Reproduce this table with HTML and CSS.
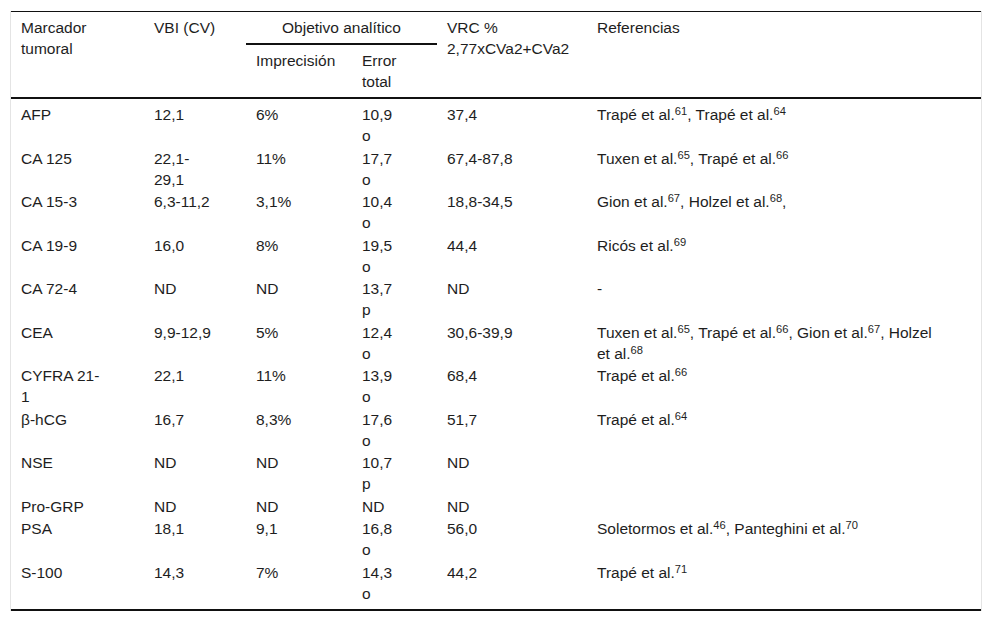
FILE: index.html
```html
<!DOCTYPE html>
<html lang="es">
<head>
<meta charset="utf-8">
<title>Marcadores tumorales</title>
<link rel="stylesheet" href="styles.css">
</head>
<body>
<div class="frame">
<table class="data">
  <colgroup>
    <col class="c1"><col class="c2"><col class="c3"><col class="c4"><col class="c5"><col class="c6">
  </colgroup>
  <thead>
    <tr>
      <th rowspan="2">Marcador<br>tumoral</th>
      <th rowspan="2">VBI (CV)</th>
      <th colspan="2" class="group">Objetivo analítico</th>
      <th rowspan="2">VRC %<br>2,77xCVa2+CVa2</th>
      <th rowspan="2">Referencias</th>
    </tr>
    <tr>
      <th>Imprecisión</th>
      <th>Error<br>total</th>
    </tr>
  </thead>
  <tbody>
    <tr><td>AFP</td><td>12,1</td><td>6%</td><td>10,9<br>o</td><td>37,4</td><td>Trapé et al.<sup>61</sup>, Trapé et al.<sup>64</sup></td></tr>
    <tr><td>CA 125</td><td>22,1-<br>29,1</td><td>11%</td><td>17,7<br>o</td><td>67,4-87,8</td><td>Tuxen et al.<sup>65</sup>, Trapé et al.<sup>66</sup></td></tr>
    <tr><td>CA 15-3</td><td>6,3-11,2</td><td>3,1%</td><td>10,4<br>o</td><td>18,8-34,5</td><td>Gion et al.<sup>67</sup>, Holzel et al.<sup>68</sup>,</td></tr>
    <tr><td>CA 19-9</td><td>16,0</td><td>8%</td><td>19,5<br>o</td><td>44,4</td><td>Ricós et al.<sup>69</sup></td></tr>
    <tr><td>CA 72-4</td><td>ND</td><td>ND</td><td>13,7<br>p</td><td>ND</td><td>-</td></tr>
    <tr><td>CEA</td><td>9,9-12,9</td><td>5%</td><td>12,4<br>o</td><td>30,6-39,9</td><td>Tuxen et al.<sup>65</sup>, Trapé et al.<sup>66</sup>, Gion et al.<sup>67</sup>, Holzel<br>et al.<sup>68</sup></td></tr>
    <tr><td>CYFRA 21-<br>1</td><td>22,1</td><td>11%</td><td>13,9<br>o</td><td>68,4</td><td>Trapé et al.<sup>66</sup></td></tr>
    <tr><td>β-hCG</td><td>16,7</td><td>8,3%</td><td>17,6<br>o</td><td>51,7</td><td>Trapé et al.<sup>64</sup></td></tr>
    <tr><td>NSE</td><td>ND</td><td>ND</td><td>10,7<br>p</td><td>ND</td><td></td></tr>
    <tr><td>Pro-GRP</td><td>ND</td><td>ND</td><td>ND</td><td>ND</td><td></td></tr>
    <tr><td>PSA</td><td>18,1</td><td>9,1</td><td>16,8<br>o</td><td>56,0</td><td>Soletormos et al.<sup>46</sup>, Panteghini et al.<sup>70</sup></td></tr>
    <tr><td>S-100</td><td>14,3</td><td>7%</td><td>14,3<br>o</td><td>44,2</td><td>Trapé et al.<sup>71</sup></td></tr>
  </tbody>
</table>
</div>
</body>
</html>
```

FILE: styles.css
```css
html, body {
  margin: 0;
  padding: 0;
  background: #ffffff;
}

body {
  font-family: "Liberation Sans", Arial, sans-serif;
  font-size: 15.5px;
  color: #1e1e1e;
}

.frame {
  margin: 11px 10px 0 10px;
  width: 970px;
  border-left: 1px solid #e4e4e4;
  border-right: 1px solid #e4e4e4;
}

.data {
  width: 970px;
  border-collapse: collapse;
  table-layout: fixed;
  border-top: 1px solid #111111;
  border-bottom: 2px solid #111111;
}

.c1 { width: 133px; }
.c2 { width: 102px; }
.c3 { width: 106px; }
.c4 { width: 85px; }
.c5 { width: 150px; }
.c6 { width: 394px; }

.data th {
  font-weight: normal;
  text-align: left;
  vertical-align: top;
  line-height: 21px;
  padding: 5px 10px 5px 10px;
}

.data th.group {
  text-align: center;
  border-bottom: 2px solid #111111;
}

.data thead {
  border-bottom: 2px solid #111111;
}

.data td {
  vertical-align: top;
  line-height: 21px;
  padding: 1.5px 10px 0 10px;
}

.data tbody tr:first-child td {
  padding-top: 5px;
}

.data tbody tr:last-child td {
  padding-bottom: 5px;
}

.data sup {
  font-size: 0.72em;
  line-height: 0;
  vertical-align: 0.45em;
}
```
